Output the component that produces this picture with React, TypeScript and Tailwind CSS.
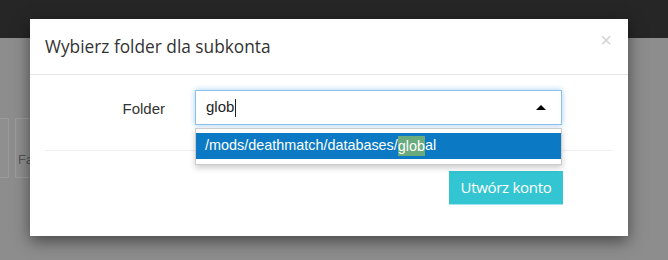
import { useState } from "react";

const sans = "font-['Liberation_Sans',Arial,sans-serif]";
const open = "font-['Open_Sans',sans-serif]";

const BackgroundPage = () => {
  return (
    <div className="w-[668px] h-[260px] bg-[#8d8d8d] flex flex-col overflow-hidden">
      <div className="h-[38px] bg-[#262626]" />
      <div className="flex gap-[6px] mt-[80px] ml-[-6px]">
        <div className="w-[15px] h-[60px] border border-[#9c9c9c] bg-[#8f8f8f]" />
        <div className="w-[40px] h-[60px] border border-[#9c9c9c] bg-[#8f8f8f] flex items-end pb-[8px] pl-[2px]">
          <span className={`${sans} text-[13px] text-[#555]`}>Fa</span>
        </div>
      </div>
    </div>
  );
};

const SubaccountModal = () => {
  const [query] = useState("glob");
  const option = "/mods/deathmatch/databases/global";
  const idx = option.indexOf(query);

  return (
    <div className="absolute left-[30px] top-[19px] w-[598px] h-[217px] bg-white shadow-[0_5px_15px_rgba(0,0,0,0.5)] flex flex-col">
      <div className="h-[56px] border-b border-[#e5e5e5] flex items-start justify-between pl-[15px] pr-[16px] pt-[16px]">
        <h4 className={`${open} text-[17.3px] font-normal text-[#333] leading-[24px]`}>
          Wybierz folder dla subkonta
        </h4>
        <span className={`${sans} text-[20px] leading-[14px] mt-[-2px] text-[#d4d4d4]`}>×</span>
      </div>
      <div className="px-[15px] pt-[15px] flex flex-col">
        <div className="flex items-start">
          <label className={`${sans} w-[135px] pr-[15px] pt-[8px] text-right text-[15px] text-[#333]`}>
            Folder
          </label>
          <div className="relative ml-[15px] w-[367px]">
            <div className="h-[35px] border border-[#8ec1ea] shadow-[0_0_6px_rgba(102,175,233,0.6)] bg-white flex items-center justify-between pl-[10px] pr-[15px]">
              <span className={`${sans} text-[15px] text-[#222]`}>
                {query}
                <span className="inline-block w-px h-[18px] bg-[#222] align-middle ml-px" />
              </span>
              <span className="w-0 h-0 border-l-[5px] border-r-[5px] border-b-[5px] border-l-transparent border-r-transparent border-b-black" />
            </div>
            <div className="absolute left-0 top-[38px] w-[367px] bg-white border border-[#ccc] shadow-[0_3px_6px_rgba(0,0,0,0.2)] pt-[4px] pb-[5px] z-10">
              <div className={`${sans} h-[26px] bg-[#0b79c3] text-white text-[14.4px] flex items-center pl-[9px]`}>
                {option.slice(0, idx)}
                <span className="bg-[#69ab7c] h-[20px] leading-[20px]">{query}</span>
                {option.slice(idx + query.length)}
              </div>
            </div>
          </div>
        </div>
        <div className="h-px bg-[#eee] mt-[25px]" />
        <div className="flex justify-end pr-[50px] mt-[20px]">
          <button className={`${open} h-[34px] w-[114px] bg-[#33c5d1] border-b border-[#9ee6ec] text-white text-[15px] tracking-[-0.3px]`}>
            Utwórz konto
          </button>
        </div>
      </div>
    </div>
  );
};

export default function App() {
  return (
    <div className="relative w-[668px] h-[260px] overflow-hidden">
      <BackgroundPage />
      <SubaccountModal />
    </div>
  );
}
